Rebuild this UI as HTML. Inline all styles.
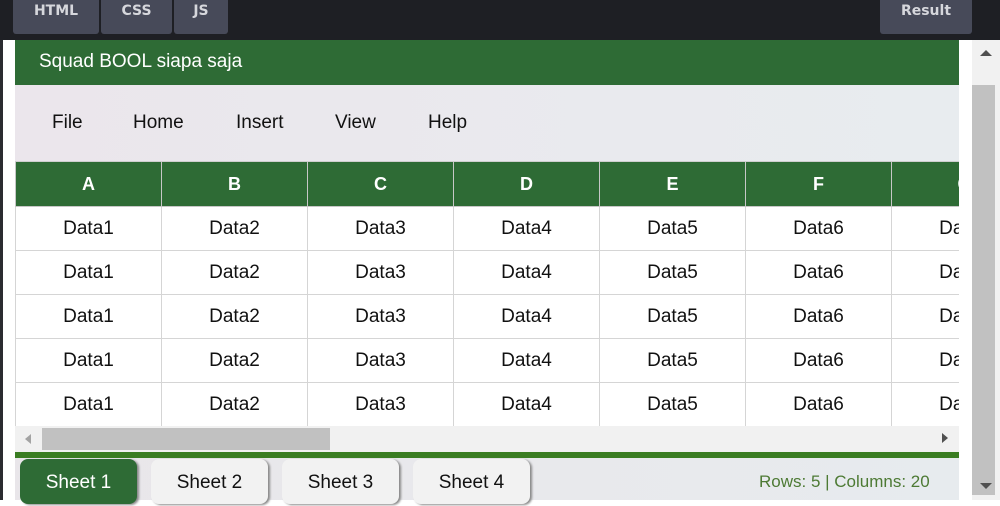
<!DOCTYPE html>
<html><head><style>
*{margin:0;padding:0;box-sizing:border-box}
body{width:1000px;height:500px;overflow:hidden;background:#fff;font-family:"Liberation Sans",sans-serif;position:relative}
.top{position:absolute;left:0;top:0;width:1000px;height:40px;background:#1e1f24}
.tb{position:absolute;top:0;height:34px;background:#474a59;color:#d6d7dc;font-weight:bold;font-size:14px;font-family:"DejaVu Sans",sans-serif;text-align:center;line-height:22px;border-radius:0 0 3px 3px}
.lstrip{position:absolute;left:0;top:40px;width:3px;height:460px;background:#2a2b30}
.hdr{position:absolute;left:15px;top:40px;width:944px;height:45px;background:#2e6b35;color:#fff;font-size:19px;line-height:44px;padding-left:24px}
.menu{position:absolute;left:15px;top:85px;width:944px;height:77px;background:linear-gradient(90deg,#ebe6ec,#e8ecef);border-bottom:1px solid #cfcfcf}
.menu span{position:absolute;top:27px;font-size:19px;color:#111}
table{position:absolute;left:0;top:0;border-collapse:collapse;table-layout:fixed;width:1022px}
td,th{width:146px;height:44px;text-align:center;font-size:19px;border:1px solid #d5d5d5;color:#111;padding-top:2px}
th{background:#2e6b35;color:#fff;font-size:18px;border-color:#c7c7c7;border-top:none;font-weight:bold}
.tw{position:absolute;left:15px;top:162px;width:944px;height:264px;overflow:hidden}
.hs{position:absolute;left:15px;top:426px;width:944px;height:26px;background:#f1f1f1}
.gl{position:absolute;left:15px;top:452px;width:944px;height:6px;background:#3a7d22}
.ft{position:absolute;left:15px;top:458px;width:944px;height:42px;background:linear-gradient(90deg,#e9e6ea,#e7ebee)}
.st{position:absolute;top:1px;width:117px;height:45px;background:#f2f2f2;border-radius:8px;box-shadow:2px 1px 2px #888;font-size:19px;text-align:center;line-height:47px;color:#111}
.vs{position:absolute;left:959px;top:40px;width:41px;height:460px;background:#fff}
</style></head><body>
<div class="top">
<div class="tb" style="left:13px;width:86px">HTML</div>
<div class="tb" style="left:101px;width:71px">CSS</div>
<div class="tb" style="left:174px;width:54px">JS</div>
<div class="tb" style="left:880px;width:92px">Result</div>
</div>
<div class="lstrip"></div>
<div class="hdr">Squad BOOL siapa saja</div>
<div class="menu"><span style="left:37px">File</span><span style="left:118px">Home</span><span style="left:221px">Insert</span><span style="left:320px">View</span><span style="left:413px">Help</span></div>
<div class="tw"><table>
<tr><th>A</th><th>B</th><th>C</th><th>D</th><th>E</th><th>F</th><th>G</th></tr>
<tr><td>Data1</td><td>Data2</td><td>Data3</td><td>Data4</td><td>Data5</td><td>Data6</td><td>Data7</td></tr>
<tr><td>Data1</td><td>Data2</td><td>Data3</td><td>Data4</td><td>Data5</td><td>Data6</td><td>Data7</td></tr>
<tr><td>Data1</td><td>Data2</td><td>Data3</td><td>Data4</td><td>Data5</td><td>Data6</td><td>Data7</td></tr>
<tr><td>Data1</td><td>Data2</td><td>Data3</td><td>Data4</td><td>Data5</td><td>Data6</td><td>Data7</td></tr>
<tr><td>Data1</td><td>Data2</td><td>Data3</td><td>Data4</td><td>Data5</td><td>Data6</td><td>Data7</td></tr>
</table></div>
<div class="hs">
<div style="position:absolute;left:10px;top:8px;width:0;height:0;border-top:5px solid transparent;border-bottom:5px solid transparent;border-right:6px solid #a3a3a3"></div>
<div style="position:absolute;left:27px;top:2px;width:288px;height:22px;background:#c1c1c1"></div>
<div style="position:absolute;left:927px;top:7px;width:0;height:0;border-top:5px solid transparent;border-bottom:5px solid transparent;border-left:6px solid #505050"></div>
</div>
<div class="gl"></div>
<div class="ft">
<div class="st" style="left:5px;background:#2e6b35;color:#fff">Sheet 1</div>
<div class="st" style="left:136px">Sheet 2</div>
<div class="st" style="left:267px">Sheet 3</div>
<div class="st" style="left:398px">Sheet 4</div>
<div style="position:absolute;left:744px;top:14px;font-size:17px;color:#4d7a34">Rows: 5 | Columns: 20</div>
</div>
<div class="vs">
<div style="position:absolute;left:13px;top:0;width:28px;height:460px;background:#f1f1f1"></div>
<div style="position:absolute;left:21px;top:10px;width:0;height:0;border-left:6px solid transparent;border-right:6px solid transparent;border-bottom:6px solid #505050"></div>
<div style="position:absolute;left:13px;top:45px;width:23px;height:410px;background:#c1c1c1"></div>
<div style="position:absolute;left:21px;top:443px;width:0;height:0;border-left:6px solid transparent;border-right:6px solid transparent;border-top:6px solid #505050"></div>
</div>
</body></html>
